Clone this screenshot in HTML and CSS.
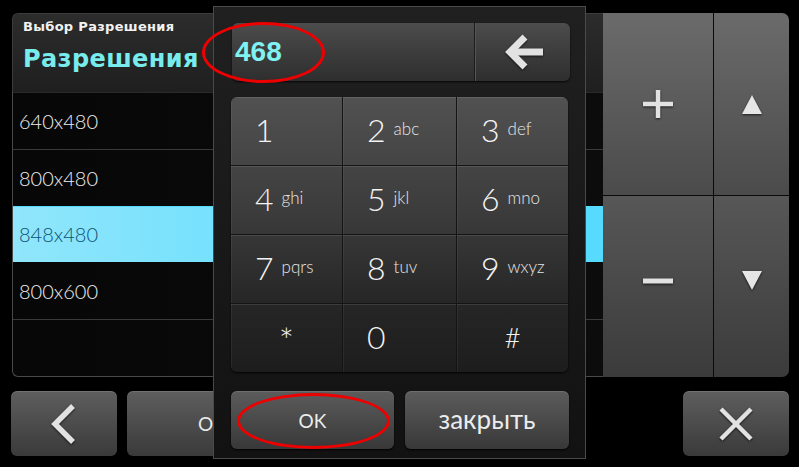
FILE: index.html
```html
<!DOCTYPE html>
<html lang="ru">
<head>
<meta charset="utf-8">
<title>Выбор Разрешения</title>
<link rel="stylesheet" href="styles.css">
</head>
<body>
<div class="screen">
  <div class="main">
    <section class="left">
      <header class="head">
        <div class="sub">Выбор Разрешения</div>
        <div class="title">Разрешения</div>
      </header>
      <ul class="list">
        <li>640x480</li>
        <li>800x480</li>
        <li class="sel">848x480</li>
        <li>800x600</li>
        <li></li>
      </ul>
    </section>
    <div class="ctrls">
      <button class="c top">
        <svg width="32" height="30" viewBox="0 0 32 30"><path d="M16 1 V29 M1 15 H31" class="ic" stroke-width="4.5"/></svg>
      </button>
      <button class="c top">
        <svg width="20" height="19" viewBox="0 0 20 19"><polygon points="10,0 20,19 0,19" class="tri"/></svg>
      </button>
      <button class="c bot">
        <svg width="32" height="8" viewBox="0 0 32 8"><path d="M1 4 H31" class="ic" stroke-width="5"/></svg>
      </button>
      <button class="c bot">
        <svg width="20" height="19" viewBox="0 0 20 19"><polygon points="0,0 20,0 10,19" class="tri"/></svg>
      </button>
    </div>
  </div>
  <div class="bar">
    <button class="b back">
      <svg width="26" height="40" viewBox="0 0 26 40"><polyline points="22,2 4,20 22,38" class="ic" stroke-width="5.5"/></svg>
    </button>
    <button class="b okbtn">OK</button>
    <button class="b close">
      <svg width="34" height="34" viewBox="0 0 34 34"><path d="M2 2 L32 32 M32 2 L2 32" class="ic" stroke-width="4.5"/></svg>
    </button>
  </div>

  <div class="dialog">
    <div class="inrow">
      <div class="field">468</div>
      <button class="bksp">
        <svg width="40" height="38" viewBox="0 0 40 38"><path d="M6 19 H38" class="ic" stroke-width="7"/><polyline points="20,4 5,19 20,34" class="ic" stroke-width="7"/></svg>
      </button>
    </div>
    <div class="pad">
      <button class="k"><span class="d">1</span></button>
      <button class="k"><span class="d">2</span><span class="l">abc</span></button>
      <button class="k"><span class="d">3</span><span class="l">def</span></button>
      <button class="k"><span class="d">4</span><span class="l">ghi</span></button>
      <button class="k"><span class="d">5</span><span class="l">jkl</span></button>
      <button class="k"><span class="d">6</span><span class="l">mno</span></button>
      <button class="k"><span class="d">7</span><span class="l">pqrs</span></button>
      <button class="k"><span class="d">8</span><span class="l">tuv</span></button>
      <button class="k"><span class="d">9</span><span class="l">wxyz</span></button>
      <button class="k mid"><span class="d star">*</span></button>
      <button class="k"><span class="d">0</span></button>
      <button class="k mid"><span class="d hash">#</span></button>
    </div>
    <div class="dbtns">
      <button class="db ok">OK</button>
      <button class="db cl">закрыть</button>
    </div>
    <span class="mark m1"></span>
    <span class="mark m2"></span>
  </div>
</div>
</body>
</html>
```

FILE: styles.css
```css
* { box-sizing: border-box; }
html, body { margin: 0; padding: 0; background: #000; }
body { width: 799px; height: 467px; overflow: hidden; font-family: "Lato", "DejaVu Sans", sans-serif; }
button { font: inherit; color: inherit; border: 0; margin: 0; padding: 0; cursor: pointer; }

.screen { position: relative; width: 799px; height: 467px; padding: 13px 10px 0 12px; background: #000; }

.main { display: flex; height: 364px; }
.left { width: 591px; display: flex; flex-direction: column; }
.head {
  height: 79px;
  border-top: 1px solid #3c3c3c; border-left: 1px solid #3c3c3c;
  border-radius: 6px 0 0 0;
  background: linear-gradient(#2c2c2c, #1f1f1f);
  padding: 5px 0 0 10px;
  font-family: "DejaVu Sans", "Liberation Sans", sans-serif;
  font-weight: bold;
}
.sub { font-size: 13px; line-height: 16px; color: #f2f2f2; letter-spacing: 0.3px; }
.title { font-size: 24px; line-height: 30px; margin-top: 9px; color: #78ecec; letter-spacing: 0.4px; }

.list {
  list-style: none; margin: 0; padding: 0; flex: 1;
  display: flex; flex-direction: column;
  border-left: 1px solid #4a4a4a; border-bottom: 1px solid #4a4a4a;
  border-radius: 0 0 0 6px;
  background: linear-gradient(90deg, #070707, #0c0c0c);
}
.list li {
  flex: 1; display: flex; align-items: center;
  padding-left: 6px; border-top: 1px solid #3a3a3a;
  font-size: 20px; color: #eeeeee; font-weight: 300;
}
.list li:first-child { border-top-color: #2a2a2a; }
.list li.sel { background: linear-gradient(90deg, #90e6fb, #5ddcff 70%, #56dbff); color: #0c5274; border-top-color: #56dbff; }
.list li.sel + li { border-top-color: transparent; }

.ctrls {
  width: 186px; display: grid;
  grid-template-columns: 110px 76px; grid-template-rows: 182px 181px;
  gap: 1px; background: #0a0a0a;
  border-radius: 0 7px 7px 0; overflow: hidden;
}
.c { display: flex; align-items: center; justify-content: center; }
.c.top { background: linear-gradient(#6b6b6b, #4b4b4b); }
.c.bot { background: linear-gradient(#575757, #3b3b3b); padding-bottom: 12px; }

.ic { fill: none; stroke: #e2e2e2; stroke-linecap: butt; stroke-linejoin: miter; }
svg { filter: drop-shadow(0 1px 1px rgba(0,0,0,0.7)); }
.tri { fill: #e6e6e6; }

.bar { display: flex; margin-top: 14px; height: 65px; margin-left: -1px; }
.b {
  border-radius: 6px;
  background: linear-gradient(#5e5e5e, #3a3a3a);
  box-shadow: inset 0 1px 0 rgba(255,255,255,0.12);
  color: #e8e8e8; display: flex; align-items: center; justify-content: center;
}
.back { width: 106px; }
.okbtn { width: 170px; margin-left: 10px; font-size: 19px; }
.close { width: 106px; margin-left: auto; }

.dialog {
  position: absolute; left: 213px; top: 6px; width: 373px; height: 453px;
  border: 1px solid #4a4a4a;
  background: linear-gradient(#202020, #121212);
  padding: 16px 16px 0 17px;
}
.inrow {
  display: flex; height: 58px; width: 338px; margin-left: 1px;
  border-radius: 6px; overflow: hidden;
  background: linear-gradient(#4c4c4c, #2e2e2e);
  box-shadow: 0 1px 2px rgba(0,0,0,0.8);
}
.field {
  width: 243px; border-right: 1px solid #1c1c1c;
  padding-left: 3px; display: flex; align-items: center;
  font-family: "Liberation Sans", sans-serif; font-weight: bold; font-size: 28px; color: #80f2f2;
}
.bksp { flex: 1; display: flex; align-items: center; justify-content: center; padding-left: 3px; background: transparent; border-left: 1px solid #555; }

.pad {
  margin-top: 16px; width: 337px; height: 275px;
  display: grid; grid-template-columns: 112px 114px 111px; grid-template-rows: 69px 69px 69px 68px;
  border-radius: 6px; overflow: hidden;
  background: linear-gradient(#515151, #3a3a3a 45%, #262626 75%, #1d1d1d);
  box-shadow: 0 1px 2px rgba(0,0,0,0.9);
}
.k {
  background: transparent; color: #f4f4f4;
  border-right: 1px solid #141414; border-bottom: 1px solid #141414;
  box-shadow: inset 0 1px 0 rgba(255,255,255,0.1), inset 1px 0 0 rgba(255,255,255,0.05);
  display: flex; align-items: center; justify-content: flex-start;
  padding: 0 0 2px 24px; text-align: left;
}
.k:nth-child(3n) { border-right: 0; }
.k:nth-child(n+10) { border-bottom: 0; }
.k.mid { justify-content: center; padding-left: 0; }
.d { font-size: 32px; line-height: 30px; font-weight: 300; }
.l { font-size: 17px; line-height: 20px; margin-left: 8px; color: #e6e6e6; font-weight: 300; padding-bottom: 2px; }
.star { font-size: 36px; padding-top: 6px; }
.hash { font-size: 28px; }

.dbtns { display: flex; gap: 11px; margin-top: 19px; }
.db {
  height: 58px; border-radius: 6px;
  background: linear-gradient(#5c5c5c, #383838);
  box-shadow: inset 0 1px 0 rgba(255,255,255,0.12), 0 1px 2px rgba(0,0,0,0.9);
  color: #ececec;
}
.db.ok { width: 163px; font-size: 19px; }
.db.cl { width: 164px; font-size: 26px; padding-bottom: 2px; }

.mark { position: absolute; border: 3px solid #ee0000; border-radius: 50%; pointer-events: none; }
.m1 { left: -12px; top: 15px; width: 123px; height: 61px; }
.m2 { left: 23px; top: 386px; width: 153px; height: 56px; }
```
